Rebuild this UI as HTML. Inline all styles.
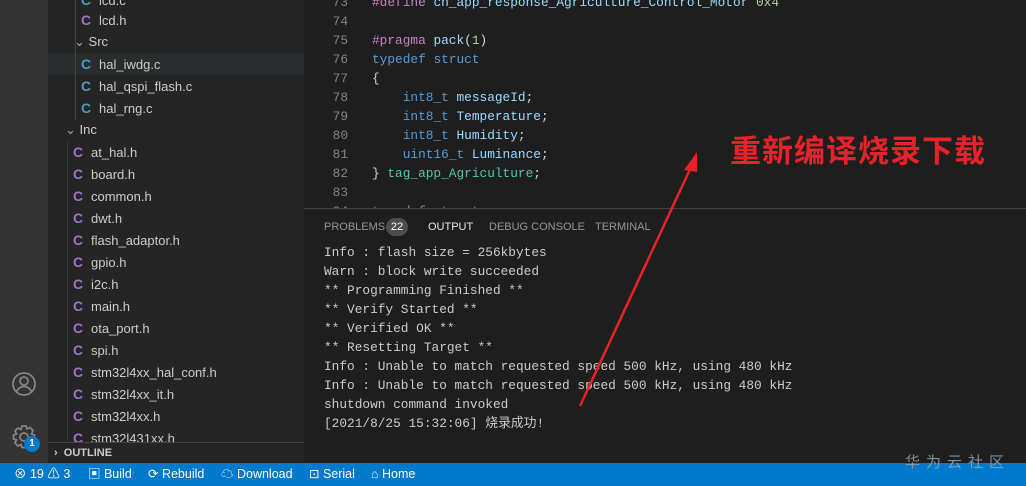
<!DOCTYPE html>
<html><head><meta charset="utf-8"><style>
*{margin:0;padding:0;box-sizing:border-box}
body{width:1026px;height:486px;overflow:hidden;background:#1e1e1e;position:relative;font-family:"Liberation Sans","Noto Sans CJK SC",sans-serif}
.act{position:absolute;left:0;top:0;width:48px;height:463px;background:#333333}
.side{position:absolute;left:48px;top:0;width:256px;height:463px;background:#252526;color:#cccccc;font-size:13px}
.row{position:absolute;height:22px;line-height:22px;white-space:nowrap}
.c{font-weight:bold;font-size:14px;display:inline-block;width:18px}
.cp{color:#a074c4}.cb{color:#519aba}
.mono{font-family:"Liberation Mono","Noto Sans CJK SC",monospace;font-size:12.8px;white-space:pre;line-height:19px}
.mono div{height:19px;line-height:19px}
.ln{position:absolute;left:304px;width:44px;text-align:right;color:#858585}
.code{position:absolute;left:372px;color:#d4d4d4}
.k{color:#569cd6}.v{color:#9cdcfe}.t{color:#4ec9b0}.m{color:#c586c0}.n{color:#b5cea8}
.panel{position:absolute;left:304px;top:208px;width:722px;height:255px;background:#1e1e1e;border-top:1px solid #444}
.tab{position:absolute;top:12px;font-size:11px;color:#969696}
.out{position:absolute;left:324px;color:#cccccc}
.status{position:absolute;left:0;top:463px;width:1026px;height:23px;background:#007acc;color:#fff;font-size:12.5px;line-height:23px}
.status span{position:absolute;top:0}
</style></head><body>
<div class="act">
<svg style="position:absolute;left:11px;top:371px" width="26" height="26" viewBox="0 0 26 26" fill="none" stroke="#858585" stroke-width="1.8"><circle cx="13" cy="13" r="11"/><circle cx="13" cy="10" r="4"/><path d="M5.5 20.5c2-3.5 4.5-5 7.5-5s5.5 1.5 7.5 5"/></svg>
<svg style="position:absolute;left:11px;top:424px" width="26" height="26" viewBox="0 0 26 26" fill="none" stroke="#858585" stroke-width="1.8"><circle cx="13" cy="13" r="4"/><path d="M11 2h4l1 3 3-1.5 3 3L20.5 10l3 1v4l-3 1 1.5 3-3 3-3-1.5-1 3h-4l-1-3-3 1.5-3-3L5.5 16l-3-1v-4l3-1L4 7l3-3 3 1.5z"/></svg>
<div style="position:absolute;left:24px;top:436px;width:16px;height:16px;border-radius:8px;background:#007acc;color:#fff;font-size:10px;font-weight:bold;text-align:center;line-height:16px">1</div>
</div>
<div class="side">
<div style="position:absolute;left:0;top:53px;width:256px;height:22px;background:#2a2d2e"></div>
<div style="position:absolute;left:27px;top:0;width:1px;height:120px;background:#444"></div>
<div style="position:absolute;left:19px;top:141px;width:1px;height:300px;background:#3a3a3a"></div>
<div class="row" style="left:33px;top:-11px"><span class="c cb">C</span>lcd.c</div>
<div class="row" style="left:33px;top:9px"><span class="c cp">C</span>lcd.h</div>
<div class="row" style="left:26px;top:31px"><span style="color:#aaa">⌄</span> Src</div>
<div class="row" style="left:33px;top:53px"><span class="c cb">C</span>hal_iwdg.c</div>
<div class="row" style="left:33px;top:75px"><span class="c cb">C</span>hal_qspi_flash.c</div>
<div class="row" style="left:33px;top:97px"><span class="c cb">C</span>hal_rng.c</div>
<div class="row" style="left:17px;top:119px"><span style="color:#aaa">⌄</span> Inc</div>
<div class="row" style="left:25px;top:141px"><span class="c cp">C</span>at_hal.h</div>
<div class="row" style="left:25px;top:163px"><span class="c cp">C</span>board.h</div>
<div class="row" style="left:25px;top:185px"><span class="c cp">C</span>common.h</div>
<div class="row" style="left:25px;top:207px"><span class="c cp">C</span>dwt.h</div>
<div class="row" style="left:25px;top:229px"><span class="c cp">C</span>flash_adaptor.h</div>
<div class="row" style="left:25px;top:251px"><span class="c cp">C</span>gpio.h</div>
<div class="row" style="left:25px;top:273px"><span class="c cp">C</span>i2c.h</div>
<div class="row" style="left:25px;top:295px"><span class="c cp">C</span>main.h</div>
<div class="row" style="left:25px;top:317px"><span class="c cp">C</span>ota_port.h</div>
<div class="row" style="left:25px;top:339px"><span class="c cp">C</span>spi.h</div>
<div class="row" style="left:25px;top:361px"><span class="c cp">C</span>stm32l4xx_hal_conf.h</div>
<div class="row" style="left:25px;top:383px"><span class="c cp">C</span>stm32l4xx_it.h</div>
<div class="row" style="left:25px;top:405px"><span class="c cp">C</span>stm32l4xx.h</div>
<div class="row" style="left:25px;top:427px"><span class="c cp">C</span>stm32l431xx.h</div>
<div style="position:absolute;left:0;top:442px;width:256px;height:21px;background:#252526;border-top:1px solid #444;font-size:11px;font-weight:bold;line-height:21px;padding-left:6px">›&nbsp; OUTLINE</div>
</div>
<div class="mono">
<div class="ln" style="top:-7px">73</div><div class="code" style="top:-7px"><span class="m">#define</span> <span class="v">ch_app_response_Agriculture_Control_Motor</span> <span class="n">0x4</span></div>
<div class="ln" style="top:12px">74</div>
<div class="ln" style="top:31px">75</div><div class="code" style="top:31px"><span class="m">#pragma</span> <span class="v">pack</span>(<span class="n">1</span>)</div>
<div class="ln" style="top:50px">76</div><div class="code" style="top:50px"><span class="k">typedef</span> <span class="k">struct</span></div>
<div class="ln" style="top:69px">77</div><div class="code" style="top:69px">{</div>
<div class="ln" style="top:88px">78</div><div class="code" style="top:88px">    <span class="k">int8_t</span> <span class="v">messageId</span>;</div>
<div class="ln" style="top:107px">79</div><div class="code" style="top:107px">    <span class="k">int8_t</span> <span class="v">Temperature</span>;</div>
<div class="ln" style="top:126px">80</div><div class="code" style="top:126px">    <span class="k">int8_t</span> <span class="v">Humidity</span>;</div>
<div class="ln" style="top:145px">81</div><div class="code" style="top:145px">    <span class="k">uint16_t</span> <span class="v">Luminance</span>;</div>
<div class="ln" style="top:164px">82</div><div class="code" style="top:164px">} <span class="t">tag_app_Agriculture</span>;</div>
<div class="ln" style="top:183px">83</div>
<div class="ln" style="top:202px">84</div><div class="code" style="top:202px"><span class="k">typedef</span> <span class="k">struct</span></div>
</div>
<div class="panel">
<span class="tab" style="left:20px">PROBLEMS</span>
<span style="position:absolute;left:82px;top:9px;width:22px;height:18px;border-radius:9px;background:#4d4d4d;color:#fff;font-size:11px;text-align:center;line-height:18px">22</span>
<span class="tab" style="left:124px;color:#e7e7e7">OUTPUT</span>
<span class="tab" style="left:185px">DEBUG CONSOLE</span>
<span class="tab" style="left:291px">TERMINAL</span>
</div>
<div class="mono">
<div class="out" style="top:243px">Info : flash size = 256kbytes</div>
<div class="out" style="top:262px">Warn : block write succeeded</div>
<div class="out" style="top:281px">** Programming Finished **</div>
<div class="out" style="top:300px">** Verify Started **</div>
<div class="out" style="top:319px">** Verified OK **</div>
<div class="out" style="top:338px">** Resetting Target **</div>
<div class="out" style="top:357px">Info : Unable to match requested speed 500 kHz, using 480 kHz</div>
<div class="out" style="top:376px">Info : Unable to match requested speed 500 kHz, using 480 kHz</div>
<div class="out" style="top:395px">shutdown command invoked</div>
<div class="out" style="top:414px">[2021/8/25 15:32:06] 烧录成功!</div>
</div>
<svg style="position:absolute;left:0;top:0" width="1026" height="486"><line x1="580" y1="406" x2="692" y2="165" stroke="#e8222a" stroke-width="2.5"/><polygon points="697,152 684,170 697,172" fill="#e8222a"/></svg>
<div style="position:absolute;left:730px;top:129px;font-size:31px;font-weight:bold;color:#e8222a;font-family:'Noto Sans CJK SC',sans-serif;line-height:40px;letter-spacing:1px">重新编译烧录下载</div>
<div class="status">
<span style="left:14px">⊗ 19 ⚠ 3</span>
<span style="left:88px">▣ Build</span>
<span style="left:148px">⟳ Rebuild</span>
<span style="left:221px">☁ Download</span>
<span style="left:309px">⊡ Serial</span>
<span style="left:371px">⌂ Home</span>
</div>
<div style="position:absolute;left:905px;top:451px;font-size:15px;color:#9aa3aa;letter-spacing:6px;opacity:.85">华为云社区</div>
</body></html>
